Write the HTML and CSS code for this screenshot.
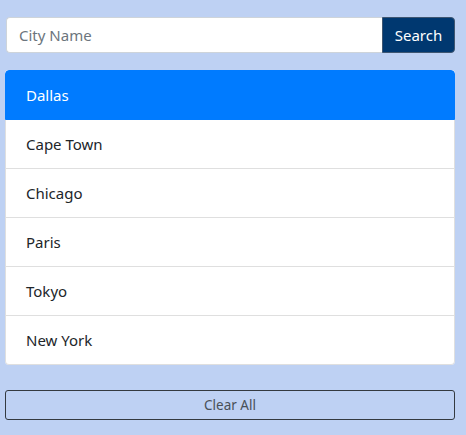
FILE: index.html
```html
<!DOCTYPE html>
<html>
<head>
<meta charset="utf-8">
<link rel="stylesheet" href="styles.css">
</head>
<body>
<div class="app">
  <div class="search">
    <input class="city" type="text" placeholder="City Name">
    <button class="go">Search</button>
  </div>
  <ul class="cities">
    <li class="item active">Dallas</li>
    <li class="item">Cape Town</li>
    <li class="item">Chicago</li>
    <li class="item">Paris</li>
    <li class="item">Tokyo</li>
    <li class="item">New York</li>
  </ul>
  <button class="clear">Clear All</button>
</div>
</body>
</html>
```

FILE: styles.css
```css
html, body {
  margin: 0;
  padding: 0;
  background: #bed1f3;
  font-family: "Segoe UI", "Noto Sans", "Open Sans", sans-serif;
}
.app {
  width: 450px;
  padding: 17px 0 0 5px;
  display: flex;
  flex-direction: column;
}
.search {
  display: flex;
  height: 36px;
}
.city {
  flex: 1;
  min-width: 0;
  box-sizing: border-box;
  height: 36px;
  margin-left: 1px;
  border: 1px solid #ced4da;
  border-right: none;
  border-radius: 4px 0 0 4px;
  padding: 0 12px;
  font-family: inherit;
  font-size: 15px;
  color: #495057;
  background: #fff;
  outline: none;
}
.city::placeholder {
  color: #6c757d;
}
.go {
  width: 73px;
  height: 36px;
  box-sizing: border-box;
  border: 1px solid #3f5671;
  border-radius: 0 4px 4px 0;
  background: #003870;
  color: #fff;
  font-family: inherit;
  font-size: 15px;
  padding: 0;
}
.cities {
  list-style: none;
  margin: 17px 0 0 0;
  padding: 0;
  background: #fff;
  border-radius: 4px;
  overflow: hidden;
}
.item {
  padding: 12px 20px;
  line-height: 24px;
  font-size: 15px;
  color: #212529;
  border: 1px solid rgba(0,0,0,0.125);
  border-top: none;
}
.item:first-child {
  border-top: 1px solid rgba(0,0,0,0.125);
  border-radius: 4px 4px 0 0;
}
.item:last-child {
  border-radius: 0 0 4px 4px;
}
.item.active {
  background: #007bff;
  border-color: #007bff;
  color: #fff;
}
.clear {
  margin-top: 25px;
  height: 30px;
  box-sizing: border-box;
  border: 1px solid #343a40;
  border-radius: 3px;
  background: transparent;
  color: #495057;
  font-family: inherit;
  font-size: 13.5px;
  padding: 0;
}
```
